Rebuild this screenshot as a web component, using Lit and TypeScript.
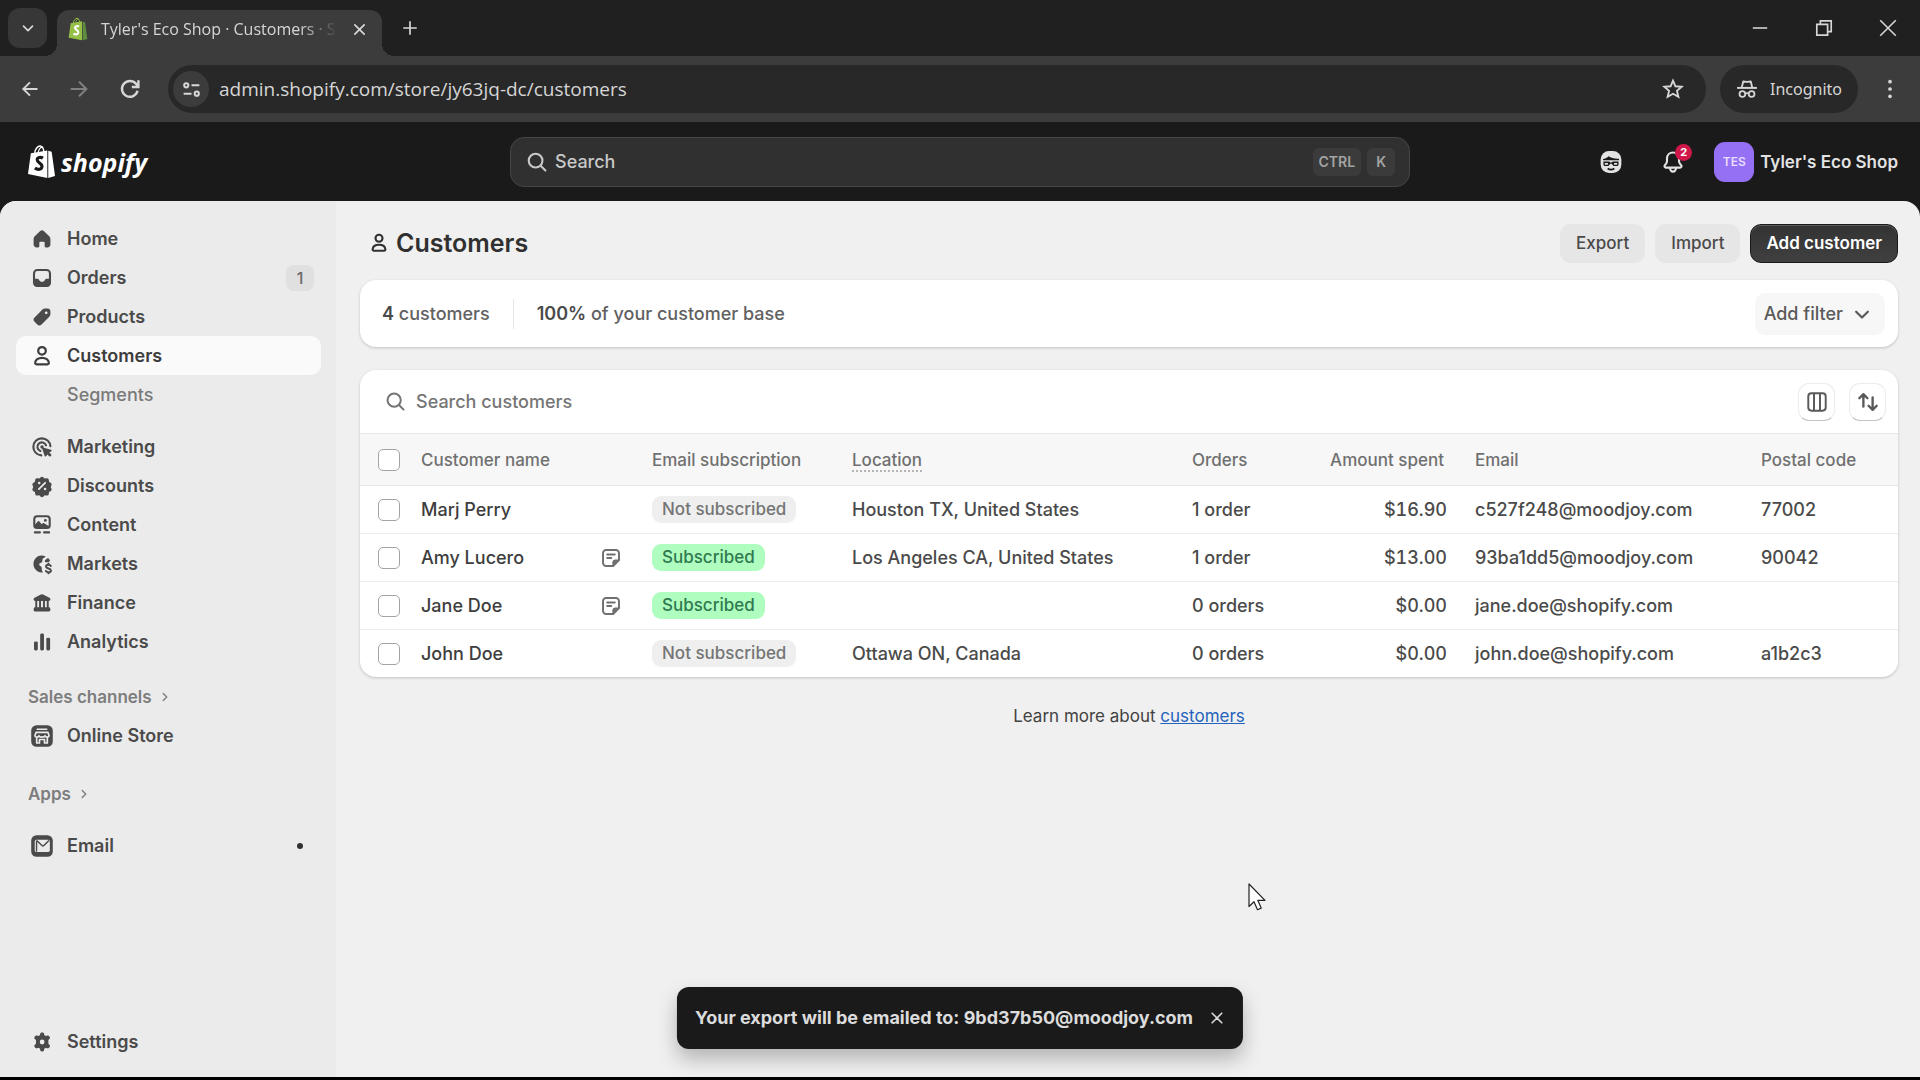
import { LitElement, html, css, svg, nothing, TemplateResult } from "lit";
import { customElement, property } from "lit/decorators.js";
import { classMap } from "lit/directives/class-map.js";

/* Icon artwork, drawn on a 20 by 20 grid. */
const ICONS: Record<string, TemplateResult> = {
  home: svg`<path fill="currentColor" d="M8.7 4.300a1.900 1.900 0 0 1 2.600 0l3.900 3.700c.5.500.8 1.100.8 1.800v4.100c0 1.200-.9 2.100-2.100 2.100h-1.200a.8.800 0 0 1-.8-.8v-2.600a.7.700 0 0 0-.7-.7H8.800a.7.700 0 0 0-.7.700v2.600c0 .4-.4.800-.8.800H6.100c-1.200 0-2.100-.9-2.100-2.100V9.800c0-.7.300-1.300.8-1.800z"/>`,
  orders: svg`<rect x="4.300" y="4.300" width="11.400" height="11.400" rx="2.400" fill="none" stroke="currentColor" stroke-width="1.500"/><path fill="currentColor" d="M4 10.600h2.900c.4 0 .7.200.9.600.4.900 1.200 1.500 2.200 1.500s1.800-.6 2.200-1.500c.2-.4.500-.6.900-.6H16v3.300c0 1.200-.9 2.100-2.100 2.100H6.100A2.100 2.100 0 0 1 4 13.900z"/>`,
  products: svg`<path fill="currentColor" fill-rule="evenodd" d="M10.300 4.700c.5-.5 1.200-.7 1.900-.7h1.900c1.100 0 1.900.9 1.900 1.900v2c0 .7-.3 1.400-.8 1.900l-5.500 5.500a2.200 2.200 0 0 1-3.100 0l-1.900-1.900a2.200 2.200 0 0 1 0-3.100zM13 8a1 1 0 1 0 0-2 1 1 0 0 0 0 2z"/>`,
  customer: svg`<g fill="none" stroke="currentColor" stroke-width="1.600" stroke-linejoin="round"><circle cx="10" cy="6.300" r="2.700"/><path d="M10 11.300c-2.800 0-4.700 1.500-4.900 3.500-.1.600.4 1.100 1 1.100h7.800c.6 0 1.100-.5 1-1.100-.2-2-2.100-3.500-4.900-3.500z"/></g>`,
  marketing: svg`<g fill="none" stroke="currentColor" stroke-width="1.500" stroke-linecap="round"><path d="M16 9.500a6.100 6.100 0 1 0-6.500 6.500"/><path d="M12.900 8.800a3.200 3.200 0 1 0-4.100 4.100"/></g><circle cx="10" cy="10" r="1.200" fill="currentColor"/><path fill="currentColor" d="M10.700 10.300l5.700 1.700c.6.200.6.900.1 1.200l-1.300.7 1.300 1.300c.3.300.3.700 0 1l-.4.400c-.3.300-.7.300-1 0l-1.300-1.300-.7 1.200c-.3.500-1 .4-1.200-.1L10.100 11c-.1-.4.200-.8.600-.7z"/>`,
  discounts: svg`<path fill="currentColor" fill-rule="evenodd" d="M8.900 3.900a1.500 1.500 0 0 1 2.200 0l.8.800 1.200-.2a1.500 1.500 0 0 1 1.800 1.300l.1 1.200 1.100.6c.7.400 1 1.300.6 2l-.5 1.100.5 1.100c.4.800.1 1.600-.6 2l-1.100.5-.1 1.200a1.500 1.500 0 0 1-1.800 1.300l-1.200-.2-.8.900a1.500 1.500 0 0 1-2.200 0l-.8-.9-1.200.2a1.500 1.500 0 0 1-1.800-1.300l-.1-1.200-1.100-.5c-.7-.4-1-1.200-.6-2l.5-1.100-.5-1.100c-.4-.7-.1-1.600.6-2L5 7l.1-1.200a1.500 1.500 0 0 1 1.800-1.300l1.200.2zM8 8.800a.9.900 0 1 0 0-1.800.9.900 0 0 0 0 1.800zm4.700-1.500a.6.600 0 0 0-.9 0l-4.500 4.500a.6.600 0 1 0 .9.900l4.500-4.500a.6.600 0 0 0 0-.9zM12.200 13a.9.900 0 1 0 0-1.800.9.900 0 0 0 0 1.800z"/>`,
  content: svg`<rect x="4.500" y="3.700" width="11" height="8.400" rx="2" fill="none" stroke="currentColor" stroke-width="1.500"/><path fill="currentColor" d="M4.500 10.300l2.300-2.700c.4-.5 1.100-.5 1.500 0l1.500 1.900.6-.6c.4-.4 1-.4 1.400 0l3.500 2.200c-.3.700-1 1-1.800 1H6.500c-1 0-1.700-.7-2-1.800z"/><circle cx="12.400" cy="6.700" r="1" fill="currentColor"/><path d="M4.900 15.300h3.600M11.500 15.300h3.600" stroke="currentColor" stroke-width="1.500" stroke-linecap="round"/>`,
  markets: svg`<path fill="currentColor" d="M12.600 4.600C10 3.300 6.700 3.900 5 6.400c-2 2.900-1.200 6.900 1.700 8.700 1.200.8 2.600 1.100 4 .9-.5-.5-.7-1.100-.8-1.800-.1-.9.100-1.500-.4-2.200-.5-.6-1.500-.8-1.500-1.700 0-1.100 1.300-1 1.900-1.600.7-.7.100-1.500.6-2.400.4-.8 1.500-.9 2.100-1.700z"/><path fill="currentColor" d="M14.300 5.700c.7.600 1.200 1.300 1.500 2.100-.9.400-2 1.100-3 1-.8-.1-1.100-.9-.6-1.500.6-.7 1.400-1.100 2.100-1.600z"/><path fill="none" stroke="currentColor" stroke-width="1.400" stroke-linecap="round" d="M16.300 11.400c-.3-.6-.9-.9-1.700-.9-1 0-1.700.5-1.700 1.300 0 1.900 3.500 1 3.500 2.800 0 .8-.7 1.300-1.800 1.300-.8 0-1.500-.3-1.800-.9M14.600 9.700v.8M14.600 15.900v.8"/>`,
  finance: svg`<path fill="currentColor" d="M9.200 3.900a1.700 1.700 0 0 1 1.600 0l4.500 2.300c.4.200.7.600.7 1.100 0 .7-.5 1.200-1.200 1.200H5.200C4.500 8.500 4 8 4 7.300c0-.5.300-.9.700-1.100zM4.600 13h10.800c.3.400.6.900.6 1.500v.3c0 .7-.4 1.200-1 1.200H5c-.6 0-1-.5-1-1.200v-.3c0-.6.300-1.100.6-1.500z"/><path d="M5.900 8v5.500M8.600 8v5.500M11.400 8v5.500M14.100 8v5.500" stroke="currentColor" stroke-width="1.400"/>`,
  analytics: svg`<g fill="currentColor"><rect x="4.300" y="9.600" width="2.700" height="6.400" rx="1"/><rect x="8.700" y="4" width="2.700" height="12" rx="1"/><rect x="13.100" y="7" width="2.700" height="9" rx="1"/></g>`,
  store: svg`<rect x="2.300" y="2.300" width="15.400" height="15.400" rx="3.800" fill="currentColor"/><g fill="none" stroke="#ebebeb" stroke-width="1.200" stroke-linejoin="round"><path d="M6.200 5.200h7.600M5.800 7.400h8.400l.8 2.100c0 .8-.7 1.300-1.400 1.300s-1.300-.4-1.500-1c-.2.600-.8 1-1.400 1-.3 0-.5-.1-.7-.200-.2.100-.5.200-.8.200-.6 0-1.200-.4-1.400-1-.2.600-.8 1-1.400 1-.8 0-1.500-.5-1.400-1.300z"/><path d="M6.200 11v4h2v-2.500h3.600V15h2v-4"/></g>`,
  email: svg`<rect x="2.300" y="2.300" width="15.400" height="15.400" rx="3.800" fill="currentColor"/><rect x="4.800" y="5.600" width="10.800" height="8.600" rx="1.200" fill="#ebebeb"/><path d="M6.200 6l3.800 3.600c.4.400.9.400 1.300 0L15 6M6.100 6v8" fill="none" stroke="currentColor" stroke-width="1"/>`,
  settings: svg`<path fill="currentColor" fill-rule="evenodd" d="M8.700 4.200c.1-.6.500-1 1.100-1h.6c.6 0 1 .4 1.100 1l.2 1c.4.100.8.300 1.100.6l1-.4c.5-.2 1.100 0 1.400.5l.3.500c.3.500.2 1.100-.2 1.500l-.8.700c.1.400.1.900.1 1.400s0 .9-.1 1.300l.8.700c.4.400.5 1 .2 1.500l-.3.500c-.3.500-.9.700-1.400.5l-1-.4c-.3.300-.7.500-1.100.6l-.2 1.100c-.1.600-.5 1-1.100 1h-.6c-.6 0-1-.4-1.100-1l-.2-1.100c-.4-.1-.8-.3-1.100-.6l-1 .4c-.5.200-1.100 0-1.400-.5l-.3-.5c-.3-.5-.2-1.100.2-1.500l.8-.7V8.600l-.8-.7c-.4-.4-.5-1-.2-1.500l.3-.5c.3-.5.900-.7 1.400-.5l1 .4c.3-.3.700-.5 1.100-.6zM10.100 11.700a1.700 1.700 0 1 0 0-3.400 1.700 1.700 0 0 0 0 3.400z"/>`,
  note: svg`<path fill="none" stroke="currentColor" stroke-width="1.400" stroke-linejoin="round" d="M6.500 4.300h7c1.200 0 2.200 1 2.200 2.200v5l-4.200 4.200h-5c-1.200 0-2.200-1-2.200-2.200v-7c0-1.200 1-2.200 2.200-2.200z"/><path fill="currentColor" d="M16 11v.6L11.600 16H11v-2.900c0-1.200.9-2.100 2.100-2.100z"/><path d="M7.300 7.500h5.400M7.300 10h2.900" stroke="currentColor" stroke-width="1.400" stroke-linecap="round"/>`,
  search: svg`<g fill="none" stroke="currentColor" stroke-width="1.500" stroke-linecap="round"><circle cx="9" cy="9" r="4.900"/><path d="M12.600 12.600L16 16"/></g>`,
  columns: svg`<g fill="none" stroke="currentColor" stroke-width="1.500"><rect x="3.300" y="3.300" width="13.400" height="13.400" rx="2.400"/><path d="M7.700 3.300v13.400M12.300 3.300v13.400"/></g>`,
  sort: svg`<path fill="none" stroke="currentColor" stroke-width="1.700" stroke-linecap="round" stroke-linejoin="round" d="M3.800 7.300L6.700 4.400l2.900 2.900M6.700 5v8.200M10.400 12.700l2.900 2.900 2.900-2.900M13.300 15V6.800"/>`,
  chevronDown: svg`<path fill="none" stroke="currentColor" stroke-width="1.700" stroke-linecap="round" stroke-linejoin="round" d="M5.500 8.200l4.500 4.500 4.500-4.500"/>`,
  chevronRight: svg`<path fill="none" stroke="currentColor" stroke-width="2" stroke-linecap="round" stroke-linejoin="round" d="M7.500 5l5 5-5 5"/>`,
  close: svg`<path fill="none" stroke="currentColor" stroke-width="2" stroke-linecap="round" d="M4.500 4.500l11 11M15.500 4.500l-11 11"/>`,
  thinClose: svg`<path fill="none" stroke="currentColor" stroke-width="1.300" d="M3.500 3.500l13 13M16.500 3.500l-13 13"/>`,
  dismiss: svg`<path fill="none" stroke="currentColor" stroke-width="2" stroke-linecap="round" d="M4 4l12 12M16 4L4 16"/>`,
  plus: svg`<path fill="none" stroke="currentColor" stroke-width="1.900" d="M10 2.500v15M2.500 10h15"/>`,
  minimize: svg`<path d="M4 10h12" stroke="currentColor" stroke-width="1.300"/>`,
  restore: svg`<path fill="none" stroke="currentColor" stroke-width="1.400" d="M4 7h9v9H4zM7 7V4h9v9h-3"/>`,
  back: svg`<path fill="none" stroke="currentColor" stroke-width="1.900" d="M17.500 10H3.500M10 3.300L3.300 10l6.700 6.700"/>`,
  forward: svg`<path fill="none" stroke="currentColor" stroke-width="1.900" d="M2.500 10h14M10 3.300l6.700 6.700-6.700 6.700"/>`,
  reload: svg`<path fill="none" stroke="currentColor" stroke-width="2" d="M16.300 11.500A6.600 6.600 0 1 1 15 5.700L16.800 8M17 2.800v5.500h-5.500"/>`,
  tune: svg`<g fill="none" stroke="currentColor" stroke-width="1.900"><circle cx="5" cy="6" r="2"/><path d="M10 6h7.500M2.500 14h7.500"/><circle cx="15" cy="14" r="2"/></g>`,
  star: svg`<path fill="none" stroke="currentColor" stroke-width="1.700" d="M10 2.300l2.200 5.200 5.700.5-4.300 3.700 1.300 5.500-4.900-2.900-4.900 2.900 1.300-5.500L2.100 8l5.700-.5z"/>`,
  incognito: svg`<path fill="none" stroke="currentColor" stroke-width="1.700" stroke-linejoin="round" d="M5.300 8.300l1.300-5.200c1.500.6 5.300.6 6.800 0l1.300 5.200"/><path d="M1 9h18" stroke="currentColor" stroke-width="1.800"/><g fill="none" stroke="currentColor" stroke-width="1.600"><circle cx="5.800" cy="14.500" r="2.600"/><circle cx="14.200" cy="14.500" r="2.600"/><path d="M8.400 14.200q1.600-.9 3.200 0"/></g>`,
  more: svg`<g fill="currentColor"><circle cx="10" cy="3.300" r="1.700"/><circle cx="10" cy="10" r="1.700"/><circle cx="10" cy="16.700" r="1.700"/></g>`,
  sidekick: svg`<rect x="2.600" y="2.200" width="14.800" height="15.600" rx="6" fill="currentColor"/><path fill="#1a1a1a" d="M4.300 7.800c1.500-.1 3.100-.9 3.900-1.900 1.800 1.300 4.700 1.900 7.500 1.700v1.200H4.300z"/><path fill="#1a1a1a" d="M4.600 9.600h4l1.400.9 1.400-.9h4v2c0 .8-.5 1.300-1.200 1.300h-1.600c-.7 0-1.200-.3-1.500-.9l-.6-.8h-1l-.6.800c-.3.600-.8.900-1.500.9H5.800c-.7 0-1.200-.5-1.200-1.300z"/><path d="M5.600 11.300h2.200M12.200 11.300h2.200" stroke="currentColor" stroke-width="1.300"/><path d="M7.600 14.700q2.400 1.500 4.800 0" fill="none" stroke="#1a1a1a" stroke-width="1.200"/>`,
  bell: svg`<path fill="none" stroke="currentColor" stroke-width="1.500" stroke-linejoin="round" d="M10 3.200c-2.500 0-4.300 1.900-4.300 4.300v1.700c0 .7-.2 1.300-.6 1.900l-1 1.300c-.5.700 0 1.600.8 1.600h10.200c.8 0 1.300-.9.800-1.600l-1-1.300c-.4-.6-.6-1.200-.6-1.900V7.500c0-2.400-1.800-4.300-4.300-4.300z"/><path fill="none" stroke="currentColor" stroke-width="1.500" d="M7.900 14.200c0 1.500.9 2.700 2.100 2.700s2.100-1.200 2.100-2.700"/>`,
};

@customElement("ui-icon")
class UiIcon extends LitElement {
  @property() name = "";
  @property({ type: Number }) size = 28;

  static styles = css`
    :host { display: inline-flex; flex: none; }
    .art { display: block; }
  `;

  render() {
    return html`<svg class="art" width=${this.size} height=${this.size} viewBox="0 0 20 20" aria-hidden="true">${ICONS[this.name]}</svg>`;
  }
}

const bag = (front: string, side: string, mark: string) => svg`
  <path d="M8 9C8.500 5 11 2 13.500 2S17 4 17.500 8" fill="none" stroke=${front} stroke-width="1.500"/>
  <path d="M11.500 9C12 5 14 3 16 3.500" fill="none" stroke=${front} stroke-width="1.200"/>
  <path fill=${front} d="M4 9.500L21 6.500V35L1 31z"/>
  <path fill=${side} d="M22 7l3.500 1L29 33l-7 2z"/>
  <path fill="none" stroke=${mark} stroke-width="3.200" d="M16.500 14.500c-2-1.300-6-1-6 1.800 0 3.200 5 3 5 6.700 0 3.600-4.500 4-7.300 1.700"/>`;

@customElement("browser-chrome")
class BrowserChrome extends LitElement {
  static styles = css`
    :host { display: block; color: #d6d6d6; font-family: "Open Sans", "Noto Sans", sans-serif; }
    button { border: 0; padding: 0; background: none; color: inherit; font: inherit; display: flex; align-items: center; justify-content: center; }
    .strip { display: flex; align-items: flex-end; height: 56px; padding: 0 20px 0 8px; background: #202020; box-sizing: border-box; }
    .tab-search { width: 39px; height: 40px; border-radius: 12px; background: #373737; margin-bottom: 8px; }
    .tab { position: relative; display: flex; align-items: center; width: 325px; height: 46px; margin-left: 10px; padding: 0 14px 8px 11px; border-radius: 12px 12px 0 0; background: #3c3c3c; box-sizing: border-box; }
    .tab::before, .tab::after { content: ""; position: absolute; bottom: 0; width: 12px; height: 12px; }
    .tab::before { right: 100%; background: radial-gradient(circle at 0 0, transparent 12px, #3c3c3c 12px); }
    .tab::after { left: 100%; background: radial-gradient(circle at 100% 0, transparent 12px, #3c3c3c 12px); }
    .tab-title { flex: 1; margin: 0 8px 0 13px; overflow: hidden; white-space: nowrap; font-size: 16px; line-height: 24px; mask-image: linear-gradient(to right, #000 82%, transparent 98%); }
    .new-tab { width: 40px; height: 40px; margin: 0 0 8px 8px; }
    .window { display: flex; gap: 40px; margin: 0 0 16px auto; }
    .bar { display: flex; align-items: center; height: 66px; padding: 0 19px 0 18px; background: #3c3c3c; box-sizing: border-box; }
    .nav { display: flex; gap: 28px; padding-left: 2px; }
    .dim { color: #808080; }
    .address { flex: 1; display: flex; align-items: center; height: 48px; margin: 0 14px 0 26px; padding: 0 22px 0 5px; border-radius: 24px; background: #282828; box-sizing: border-box; }
    .site { width: 36px; height: 36px; border-radius: 50%; background: #3c3c3c; }
    .url { flex: 1; min-width: 0; margin: 0 10px; padding: 0; border: 0; outline: 0; background: none; color: #d6d6d6; font: 19px/28px "Open Sans", "Noto Sans", sans-serif; }
    .incognito { display: flex; align-items: center; gap: 12px; height: 48px; padding: 0 16px; border-radius: 24px; background: #282828; font: 16px/24px "Noto Sans", sans-serif; }
    .menu { margin-left: 21px; }
  `;

  render() {
    return html`
      <div class="strip">
        <button class="tab-search" aria-label="Search tabs"><ui-icon name="chevronDown" size="20"></ui-icon></button>
        <div class="tab">
          <svg width="20" height="24" viewBox="0 0 30 36" aria-hidden="true">${bag("#95bf47", "#5e8e3e", "#ffffff")}</svg>
          <span class="tab-title">Tyler's Eco Shop · Customers · S</span>
          <button aria-label="Close tab"><ui-icon name="close" size="17"></ui-icon></button>
        </div>
        <button class="new-tab" aria-label="New tab"><ui-icon name="plus" size="18"></ui-icon></button>
        <div class="window">
          <button aria-label="Minimize"><ui-icon name="minimize" size="24"></ui-icon></button>
          <button aria-label="Restore"><ui-icon name="restore" size="24"></ui-icon></button>
          <button aria-label="Close"><ui-icon name="thinClose" size="24"></ui-icon></button>
        </div>
      </div>
      <div class="bar">
        <div class="nav">
          <button aria-label="Back"><ui-icon name="back" size="20"></ui-icon></button>
          <button class="dim" aria-label="Forward"><ui-icon name="forward" size="22"></ui-icon></button>
          <button aria-label="Reload"><ui-icon name="reload" size="24"></ui-icon></button>
        </div>
        <div class="address">
          <button class="site" aria-label="Site information"><ui-icon name="tune" size="21"></ui-icon></button>
          <input class="url" aria-label="Address" value="admin.shopify.com/store/jy63jq-dc/customers" />
          <button aria-label="Bookmark"><ui-icon name="star" size="22"></ui-icon></button>
        </div>
        <button class="incognito"><ui-icon name="incognito" size="22"></ui-icon>Incognito</button>
        <button class="menu" aria-label="Menu"><ui-icon name="more" size="22"></ui-icon></button>
      </div>
    `;
  }
}

@customElement("top-bar")
class TopBar extends LitElement {
  static styles = css`
    :host { display: grid; grid-template-columns: 1fr minmax(0, 900px) 1fr; align-items: center; height: 79px; padding: 0 22px; background: #1a1a1a; color: #e3e3e3; font-family: Inter, sans-serif; box-sizing: border-box; }
    button { border: 0; padding: 0; background: none; color: inherit; font: inherit; display: flex; align-items: center; }
    .logo { display: flex; align-items: center; gap: 5px; padding-left: 5px; color: #fff; text-decoration: none; font: italic 700 25px/34px "Open Sans", sans-serif; }
    .search { height: 50px; padding: 0 14px 0 12px; border: 1px solid #454545; border-radius: 14px; background: #303030; color: #c8c8c8; font-size: 18px; font-weight: 500; width: 100%; box-sizing: border-box; }
    .search-label { flex: 1; margin-left: 4px; text-align: left; }
    .key { height: 28px; margin-left: 6px; padding: 0 6px; border-radius: 6px; background: #3b3b3b; color: #a3a3a3; font: 600 14px/28px Inter, sans-serif; }
    .key-single { padding: 0 9px; }
    .tools { display: flex; align-items: center; justify-content: flex-end; }
    .bell { position: relative; margin: 0 27px 0 34px; }
    .count { position: absolute; top: -4px; right: -5px; min-width: 17px; height: 17px; border-radius: 9px; background: #d0174a; color: #fff; font-size: 11px; font-weight: 700; line-height: 17px; text-align: center; }
    .account { gap: 6px; font-size: 17px; font-weight: 600; white-space: nowrap; }
    .avatar { width: 40px; height: 40px; border-radius: 11px; background: #9570f5; color: #e8deff; font-size: 12px; line-height: 40px; text-align: center; }
  `;

  render() {
    return html`
      <a class="logo" href="#" aria-label="Shopify home">
        <svg width="29" height="35" viewBox="0 0 30 36" aria-hidden="true">${bag("#ffffff", "#ffffff", "#1a1a1a")}</svg>
        <span>shopify</span>
      </a>
      <button class="search">
        <ui-icon name="search" size="28"></ui-icon>
        <span class="search-label">Search</span>
        <kbd class="key">CTRL</kbd><kbd class="key key-single">K</kbd>
      </button>
      <div class="tools">
        <button aria-label="Sidekick"><ui-icon name="sidekick" size="28"></ui-icon></button>
        <button class="bell" aria-label="Notifications"><ui-icon name="bell" size="28"></ui-icon><span class="count">2</span></button>
        <button class="account"><span class="avatar">TES</span>Tyler's Eco Shop</button>
      </div>
    `;
  }
}

interface NavItem { label: string; icon?: string; active?: boolean; count?: string; dot?: boolean; }

const PRIMARY: NavItem[] = [
  { label: "Home", icon: "home" },
  { label: "Orders", icon: "orders", count: "1" },
  { label: "Products", icon: "products" },
  { label: "Customers", icon: "customer", active: true },
  { label: "Segments" },
];
const SECONDARY: NavItem[] = [
  { label: "Marketing", icon: "marketing" },
  { label: "Discounts", icon: "discounts" },
  { label: "Content", icon: "content" },
  { label: "Markets", icon: "markets" },
  { label: "Finance", icon: "finance" },
  { label: "Analytics", icon: "analytics" },
];

@customElement("side-nav")
class SideNav extends LitElement {
  static styles = css`
    :host { display: flex; flex-direction: column; flex: none; width: 336px; padding: 18px 15px 16px 16px; background: #ebebeb; color: #4a4a4a; font: 500 18px/24px Inter, sans-serif; box-sizing: border-box; }
    .nav { display: flex; flex-direction: column; flex: 1; }
    .group { display: flex; flex-direction: column; margin: 0 0 13px; padding: 0; list-style: none; }
    .link { display: flex; align-items: center; height: 39px; padding: 0 7px 0 12px; gap: 11px; border-radius: 10px; color: inherit; text-decoration: none; font-weight: 600; box-sizing: border-box; }
    .active { background: #fafafa; color: #3d3d3d; }
    .sub { padding-left: 51px; color: #7a7a7a; font-weight: 550; }
    .label { flex: 1; }
    .count { width: 28px; height: 26px; border-radius: 8px; background: #e0e0e0; color: #6b6b6b; font-size: 16px; font-weight: 500; line-height: 26px; text-align: center; }
    .dot { width: 6px; height: 6px; margin-right: 11px; border-radius: 50%; background: #303030; }
    .heading { display: flex; align-items: center; gap: 6px; height: 39px; margin-top: 3px; padding: 0 12px; border: 0; background: none; color: #7d7d7d; font: 600 17px/24px Inter, sans-serif; }
    .apps { margin: 6px 0 13px; }
    .bottom { margin: auto 0 0; }
  `;

  private item(i: NavItem) {
    return html`<li><a class=${classMap({ link: true, active: !!i.active, sub: !i.icon })} href="#">
      ${i.icon ? html`<ui-icon name=${i.icon}></ui-icon>` : nothing}
      <span class="label">${i.label}</span>
      ${i.count ? html`<span class="count">${i.count}</span>` : nothing}
      ${i.dot ? html`<span class="dot"></span>` : nothing}
    </a></li>`;
  }

  render() {
    return html`<nav class="nav" aria-label="Main">
      <ul class="group">${PRIMARY.map((i) => this.item(i))}</ul>
      <ul class="group">${SECONDARY.map((i) => this.item(i))}</ul>
      <button class="heading">Sales channels <ui-icon name="chevronRight" size="14"></ui-icon></button>
      <ul class="group">${this.item({ label: "Online Store", icon: "store" })}</ul>
      <button class="heading apps">Apps <ui-icon name="chevronRight" size="14"></ui-icon></button>
      <ul class="group">${this.item({ label: "Email", icon: "email", dot: true })}</ul>
      <ul class="group bottom">${this.item({ label: "Settings", icon: "settings" })}</ul>
    </nav>`;
  }
}

interface Customer { name: string; note: boolean; subscribed: boolean; location: string; orders: string; spent: string; email: string; postal: string; }

const CUSTOMERS: Customer[] = [
  { name: "Marj Perry", note: false, subscribed: false, location: "Houston TX, United States", orders: "1 order", spent: "$16.90", email: "c527f248@moodjoy.com", postal: "77002" },
  { name: "Amy Lucero", note: true, subscribed: true, location: "Los Angeles CA, United States", orders: "1 order", spent: "$13.00", email: "93ba1dd5@moodjoy.com", postal: "90042" },
  { name: "Jane Doe", note: true, subscribed: true, location: "", orders: "0 orders", spent: "$0.00", email: "jane.doe@shopify.com", postal: "" },
  { name: "John Doe", note: false, subscribed: false, location: "Ottawa ON, Canada", orders: "0 orders", spent: "$0.00", email: "john.doe@shopify.com", postal: "a1b2c3" },
];

@customElement("customer-table")
class CustomerTable extends LitElement {
  static styles = css`
    :host { display: block; border-radius: 16px; background: #fff; overflow: hidden; box-shadow: 0 1px 3px rgba(0, 0, 0, 0.2); font: 450 18px/24px Inter, sans-serif; color: #4a4a4a; }
    .tools { display: flex; align-items: center; gap: 14px; height: 63px; padding: 0 12px 0 22px; box-sizing: border-box; }
    .field { flex: 1; display: flex; align-items: center; gap: 7px; color: #757575; }
    .query { flex: 1; border: 0; padding: 0; outline: 0; background: none; font: inherit; color: inherit; }
    .query::placeholder { color: #757575; opacity: 1; }
    .tool { display: flex; align-items: center; justify-content: center; width: 37px; height: 38px; padding: 0; border: 1px solid #ececec; border-bottom-color: #c4c4c4; border-radius: 11px; background: #fff; color: #5a5a5a; }
    .grid { width: 100%; table-layout: fixed; border-collapse: collapse; }
    .c-check { width: 51px; }
    .c-name { width: 231px; }
    .c-sub { width: 200px; }
    .c-loc { width: 340px; }
    .c-orders { width: 110px; }
    .c-spent { width: 173px; }
    .c-email { width: 286px; }
    .c-postal { width: 147px; }
    .grid th { height: 51px; padding: 0 10px; border-top: 1px solid #e6e6e6; border-bottom: 1px solid #e6e6e6; background: #f7f7f7; color: #707070; font-size: 17px; font-weight: 550; text-align: left; }
    .grid td { height: 47px; padding: 0 10px; border-top: 1px solid #ededed; white-space: nowrap; }
    .grid .num { padding-right: 18px; text-align: right; font-variant-numeric: tabular-nums; }
    .grid th.num { padding-right: 21px; }
    .grid .pick { padding: 0 0 0 18px; }
    .box { display: block; width: 22px; height: 22px; margin: 0; appearance: none; border: 1px solid #a3a3a3; border-radius: 5px; background: #fff; }
    .name { display: flex; align-items: center; justify-content: space-between; padding-right: 7px; font-weight: 550; color: #3d3d3d; }
    .note { color: #707070; }
    .badge { display: inline-block; height: 27px; padding: 0 10px; border-radius: 9px; background: #efefef; color: #757575; font-size: 17px; font-weight: 550; line-height: 27px; vertical-align: middle; }
    .on { background: #affebf; color: #2f7a50; }
    .dotted { border-bottom: 2px dotted #b5b5b5; }
  `;

  render() {
    return html`
      <div class="tools">
        <label class="field"><ui-icon name="search" size="27"></ui-icon><input class="query" type="text" placeholder="Search customers" aria-label="Search customers" /></label>
        <button class="tool" aria-label="Edit columns"><ui-icon name="columns" size="26"></ui-icon></button>
        <button class="tool" aria-label="Sort"><ui-icon name="sort" size="28"></ui-icon></button>
      </div>
      <table class="grid">
        <colgroup>
          <col class="c-check" /><col class="c-name" /><col class="c-sub" /><col class="c-loc" />
          <col class="c-orders" /><col class="c-spent" /><col class="c-email" /><col class="c-postal" />
        </colgroup>
        <thead>
          <tr>
            <th class="pick"><input class="box" type="checkbox" aria-label="Select all customers" /></th>
            <th>Customer name</th>
            <th>Email subscription</th>
            <th><span class="dotted">Location</span></th>
            <th>Orders</th>
            <th class="num">Amount spent</th>
            <th>Email</th>
            <th>Postal code</th>
          </tr>
        </thead>
        <tbody>
          ${CUSTOMERS.map((c) => html`<tr>
            <td class="pick"><input class="box" type="checkbox" aria-label="Select ${c.name}" /></td>
            <td><span class="name">${c.name}${c.note ? html`<ui-icon class="note" name="note" size="28"></ui-icon>` : nothing}</span></td>
            <td><span class=${classMap({ badge: true, on: c.subscribed })}>${c.subscribed ? "Subscribed" : "Not subscribed"}</span></td>
            <td>${c.location}</td>
            <td>${c.orders}</td>
            <td class="num">${c.spent}</td>
            <td>${c.email}</td>
            <td>${c.postal}</td>
          </tr>`)}
        </tbody>
      </table>
    `;
  }
}

@customElement("app-root")
class AppRoot extends LitElement {
  static styles = css`
    :host { position: relative; display: flex; flex-direction: column; min-height: 100vh; border-bottom: 3px solid #000; background: #1a1a1a; font: 500 18px/24px Inter, sans-serif; color: #616161; box-sizing: border-box; overflow: hidden; }
    .frame { flex: 1; display: flex; border-radius: 16px 16px 0 0; overflow: hidden; background: #f0f0f0; }
    .page { flex: 1; min-width: 0; padding: 22px 22px 0 24px; }
    .head { display: flex; align-items: center; gap: 10px; height: 40px; margin-bottom: 17px; padding-left: 6px; }
    .title { flex: 1; display: flex; align-items: center; gap: 4px; margin: 0; color: #303030; font-size: 25px; line-height: 32px; font-weight: 600; }
    .btn { height: 39px; padding: 0 16px; border: 0; border-radius: 11px; background: #e6e6e6; color: #4a4a4a; font: 550 17px/24px Inter, sans-serif; }
    .primary { padding: 0 15px; border: 1px solid #1a1a1a; background: linear-gradient(#333, #404040); color: #fff; font-weight: 600; box-shadow: inset 0 1px 0 #5c5c5c; }
    .summary { display: flex; align-items: center; height: 67px; margin-bottom: 23px; padding: 0 13px 0 22px; border-radius: 16px; background: #fff; box-shadow: 0 1px 3px rgba(0, 0, 0, 0.2); font-weight: 550; box-sizing: border-box; }
    .rule { width: 1px; height: 30px; margin: 0 23px; background: #e6e6e6; }
    .share { flex: 1; }
    .strong { font-weight: 600; color: #4a4a4a; }
    .filter { display: flex; align-items: center; gap: 6px; height: 42px; padding: 0 10px 0 9px; border: 0; border-radius: 10px; background: #f7f7f7; color: #5a5a5a; font: 500 18px/24px Inter, sans-serif; }
    .help { margin: 27px 0 0; text-align: center; font-size: 17px; font-weight: 400; color: #424242; }
    .help-link { color: #2463bc; }
    .toast { position: absolute; bottom: 28px; left: 50%; transform: translateX(-50%); display: flex; align-items: center; gap: 16px; height: 62px; padding: 0 18px; border-radius: 12px; background: #1a1a1a; color: #dcdcdc; font-weight: 650; white-space: nowrap; box-shadow: 0 10px 20px rgba(0, 0, 0, 0.25); box-sizing: border-box; }
    .dismiss { display: flex; padding: 0; border: 0; background: none; color: inherit; }
    .cursor { position: absolute; left: 65%; top: 883px; }
  `;

  render() {
    return html`
      <browser-chrome></browser-chrome>
      <top-bar></top-bar>
      <div class="frame">
        <side-nav></side-nav>
        <main class="page">
          <header class="head">
            <h1 class="title"><ui-icon name="customer" size="26"></ui-icon>Customers</h1>
            <button class="btn">Export</button>
            <button class="btn">Import</button>
            <button class="btn primary">Add customer</button>
          </header>
          <section class="summary">
            <span><span class="strong">4</span> customers</span>
            <span class="rule"></span>
            <span class="share"><span class="strong">100%</span> of your customer base</span>
            <button class="filter">Add filter <ui-icon name="chevronDown" size="26"></ui-icon></button>
          </section>
          <customer-table></customer-table>
          <p class="help">Learn more about <a class="help-link" href="#">customers</a></p>
        </main>
      </div>
      <div class="toast" role="status">
        Your export will be emailed to: 9bd37b50@moodjoy.com
        <button class="dismiss" aria-label="Dismiss"><ui-icon name="dismiss" size="16"></ui-icon></button>
      </div>
      <svg class="cursor" width="18" height="28" viewBox="0 0 18 28" aria-hidden="true">
        <path d="M1 1v22.500l5-4.800 3.500 8 3.700-1.600-3.400-7.800H17z" fill="#fff" stroke="#222" stroke-width="1.200" stroke-linejoin="round"/>
      </svg>
    `;
  }
}
